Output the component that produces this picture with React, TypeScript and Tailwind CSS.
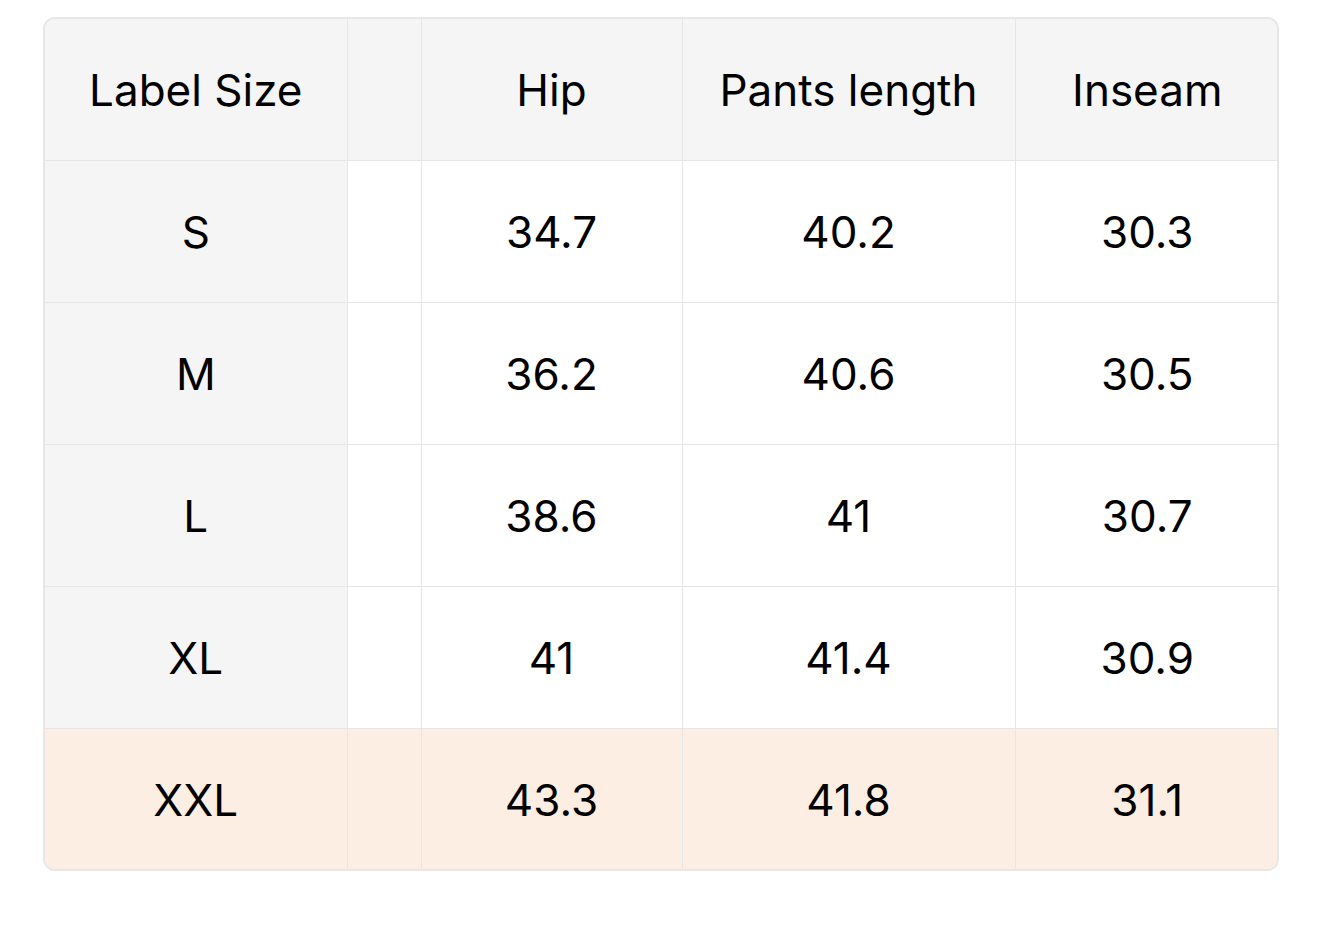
const headers = ['Label Size', '', 'Hip', 'Pants length', 'Inseam']

const rows = [
  ['S', '', '34.7', '40.2', '30.3'],
  ['M', '', '36.2', '40.6', '30.5'],
  ['L', '', '38.6', '41', '30.7'],
  ['XL', '', '41', '41.4', '30.9'],
  ['XXL', '', '43.3', '41.8', '31.1']
]

const widths = ['w-[302px]', 'w-[74px]', 'w-[261px]', 'w-[333px]', 'w-[264px]']

export default function App() {
  return (
    <div className="min-h-[932px] w-[1320px] bg-white pt-[17px] pl-[43px] font-['Inter','Liberation_Sans',sans-serif] text-black">
      <div className="w-[1236px] overflow-hidden rounded-[12px] border-2 border-[#e7e7e7]">
        <table className="w-full table-fixed border-collapse">
          <colgroup>
            {widths.map((w, i) => (
              <col key={i} className={w} />
            ))}
          </colgroup>
          <thead>
            <tr className="h-[141px] bg-[#f5f5f5]">
              {headers.map((h, i) => (
                <th
                  key={i}
                  className="border-r border-b border-[#e6e6e6] pt-[2px] text-center text-[44px] font-normal leading-none last:border-r-0"
                >
                  {h}
                </th>
              ))}
            </tr>
          </thead>
          <tbody>
            {rows.map((r, ri) => {
              const last = ri === rows.length - 1
              return (
                <tr key={ri} className={last ? 'h-[141px] bg-[#fdeee3]' : 'h-[142px] bg-white'}>
                  {r.map((c, ci) => (
                    <td
                      key={ci}
                      className={
                        'border-r border-[#e6e6e6] pt-[2px] text-center text-[44px] leading-none last:border-r-0 ' +
                        (last ? '' : 'border-b ') +
                        (ci === 0 && !last ? 'bg-[#f5f5f5]' : '')
                      }
                    >
                      {c}
                    </td>
                  ))}
                </tr>
              )
            })}
          </tbody>
        </table>
      </div>
    </div>
  )
}
